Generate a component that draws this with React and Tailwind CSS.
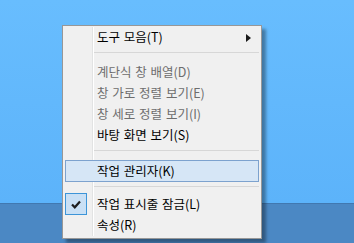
import React from "react";

const font = { fontFamily: '"Malgun Gothic", "Noto Sans CJK KR", "Noto Sans", sans-serif' };

const Item = ({ label, disabled, arrow, highlight, checked, h = "h-[21px]" }) => (
  <div className={`relative flex items-center ${h}`}>
    {highlight && (
      <div className="absolute inset-y-0 left-[2px] right-[2px] border border-[#7da2ce] bg-[#d6e6f6]" />
    )}
    {checked && (
      <div className="absolute left-[2px] top-0 flex h-[22px] w-[22px] items-center justify-center border border-[#3d95d8] bg-[#c9e0f5]">
        <svg width="10" height="9" viewBox="0 0 10 9">
          <path d="M1 4.5 L3.8 7.3 L9 1.5" stroke="#1e1e1e" strokeWidth="2.2" fill="none" />
        </svg>
      </div>
    )}
    <span
      className={`relative pl-[34px] text-[12.5px] leading-none [word-spacing:1px] ${disabled ? "text-[#6d6d6d]" : "text-black"}`}
    >
      {label}
    </span>
    {arrow && (
      <svg className="absolute right-[10px] top-[7px]" width="5" height="8" viewBox="0 0 5 8">
        <path d="M0 0 L5 4 L0 8 Z" fill="#1a1a1a" />
      </svg>
    )}
  </div>
);

const Sep = ({ h, mt }) => (
  <div className={h}>
    <div className={`${mt} ml-[29px] mr-[2px] h-px bg-[#d7d7d7]`} />
  </div>
);

export default function App() {
  return (
    <div className="relative flex h-[243px] w-[354px] flex-col overflow-hidden" style={font}>
      <div className="flex-1 bg-gradient-to-b from-[#68bdfe] to-[#5cb3fa]" />
      <div className="h-[40px] border-t border-[#4178b0] bg-[#4b88c4]" />

      {/* context menu */}
      <div className="absolute left-[62px] top-[25px] w-[200px] border border-[#979797] bg-[#f0f0f0] pb-[2px] pt-[1px] shadow-[4px_4px_3px_rgba(0,0,0,0.35)]">
        <div className="absolute bottom-[2px] left-[29px] top-[1px] w-px bg-[#e2e3e3]" />
        <div className="absolute bottom-[2px] left-[30px] top-[1px] w-px bg-white" />
        <Item label="도구 모음(T)" arrow />
        <Sep h="h-[10px]" mt="mt-[4px]" />
        <Item label="계단식 창 배열(D)" disabled />
        <Item label="창 가로 정렬 보기(E)" disabled />
        <Item label="창 세로 정렬 보기(I)" disabled />
        <Item label="바탕 화면 보기(S)" />
        <Sep h="h-[10px]" mt="mt-[4px]" />
        <Item label="작업 관리자(K)" highlight h="h-[22px]" />
        <Sep h="h-[7px]" mt="mt-[4px]" />
        <Item label="작업 표시줄 잠금(L)" checked h="h-[22px]" />
        <Item label="속성(R)" />
      </div>
    </div>
  );
}
